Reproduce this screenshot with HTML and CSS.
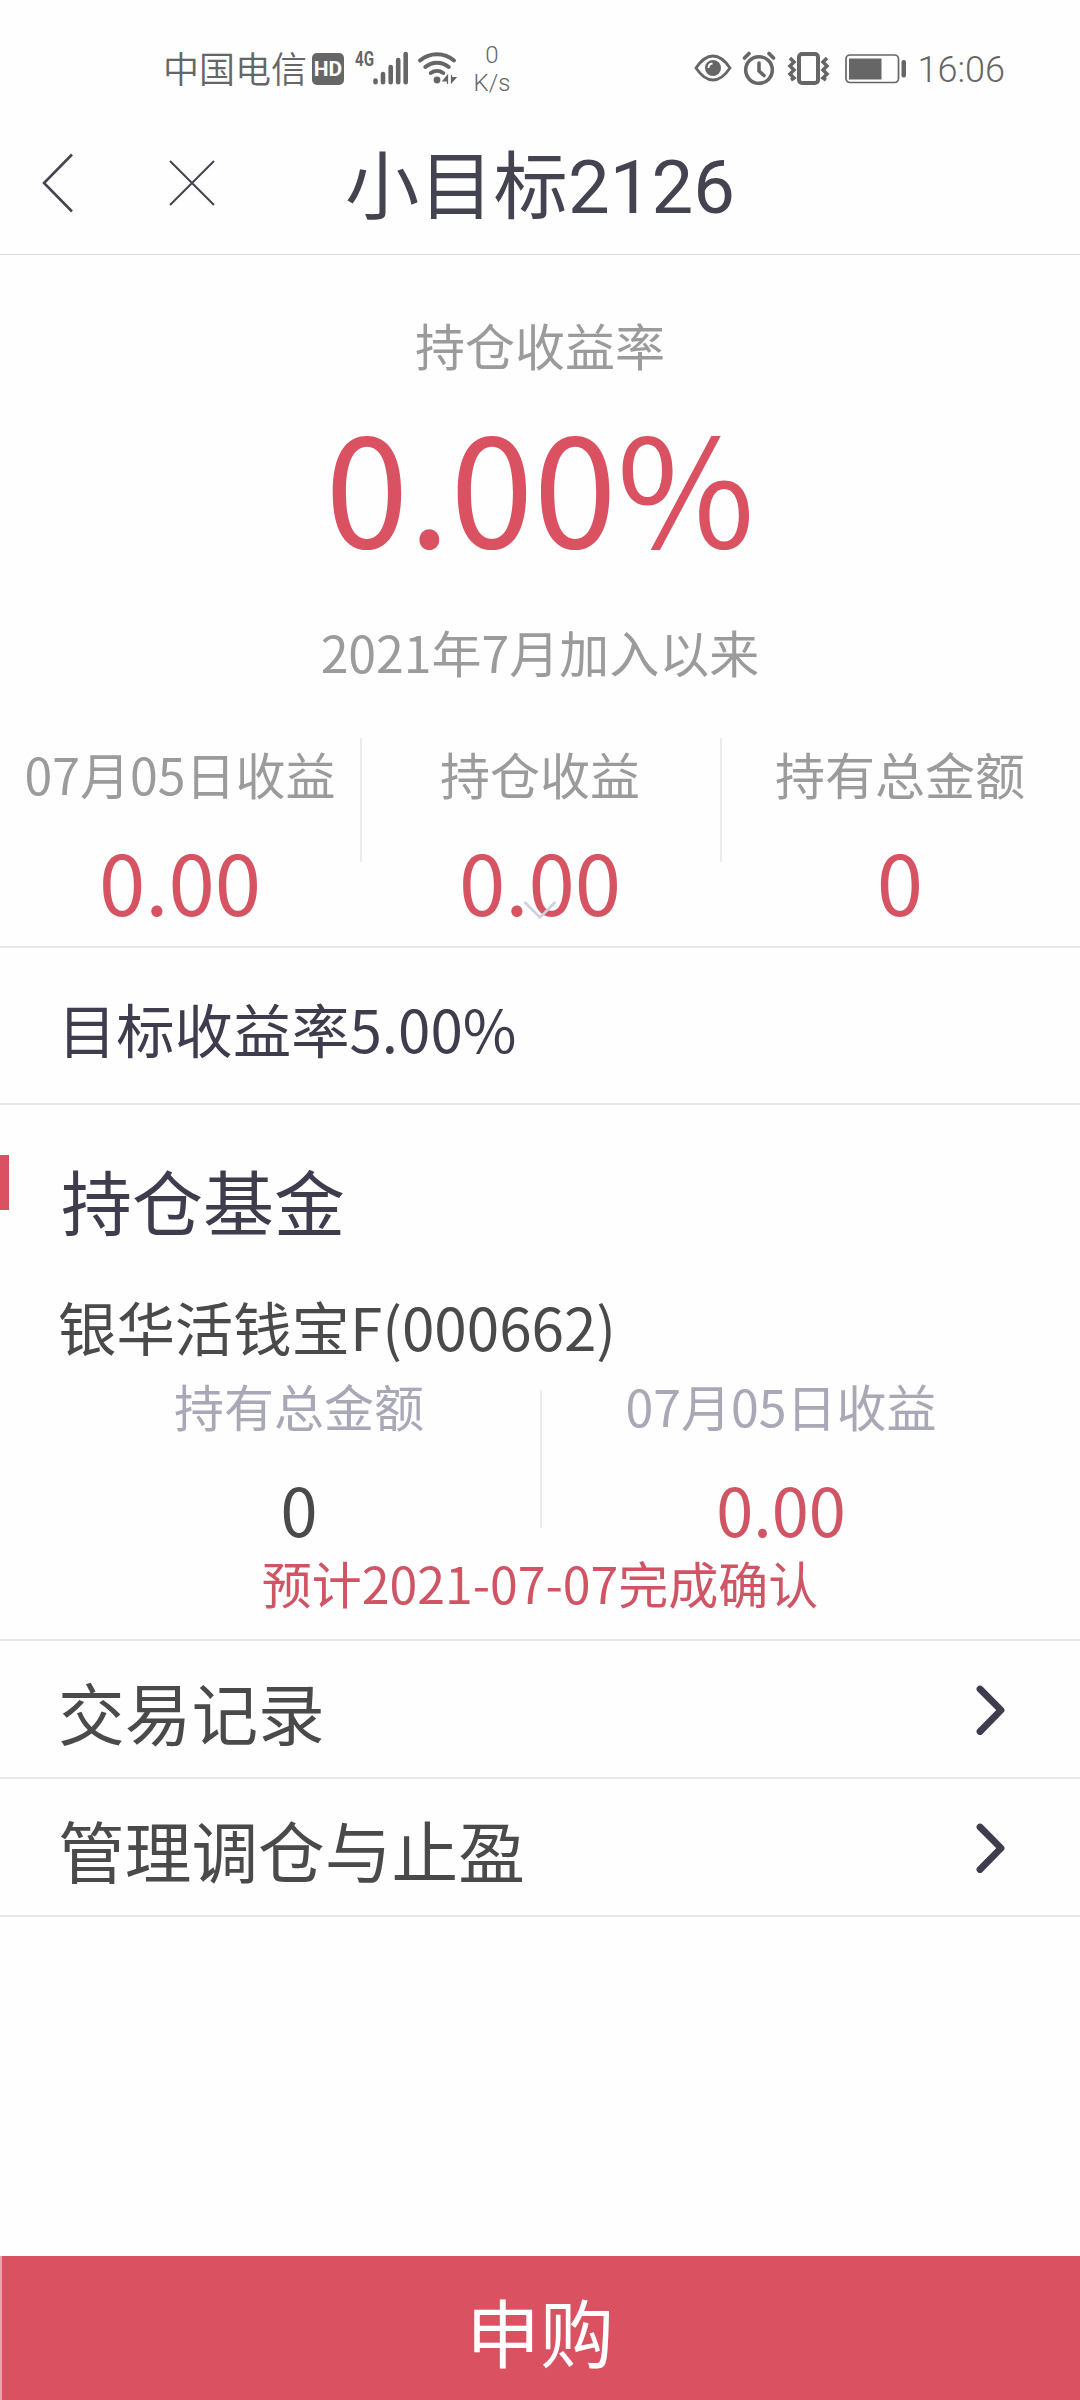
FILE: index.html
```html
<!DOCTYPE html>
<html lang="zh-CN">
<head>
    <meta charset="UTF-8">
    <meta name="viewport" content="width=device-width, initial-scale=1.0">
    <title>小目标2126</title>
    <link rel="stylesheet" href="styles.css">
</head>
<body>

    <div class="status-bar">
        <div class="status-left">
            <span class="carrier">中国电信</span>
            <span class="hd">HD</span>
            <span class="net">4G</span>
            <svg class="signal" width="36" height="34" viewBox="0 0 36 34" fill="none" stroke="#666" stroke-width="4.6" stroke-linecap="round">
                <path d="M2.500 29.500v1.800M10 23v8.300M17.700 16v15.300M25.200 9v22.300M32.700 3v28.300"/>
            </svg>
            <svg class="wifi" width="40" height="34" viewBox="0 0 40 34" fill="none" stroke="#666" stroke-width="4" stroke-linecap="round">
                <path d="M3 9.500a26 26 0 0 1 34 0M8.300 16a18 18 0 0 1 23.400 0M13.800 22a10.500 10.500 0 0 1 12.400 0"/>
                <circle cx="20" cy="29" r="3.400" fill="#666" stroke="none"/>
                <path d="M30.500 24v9M30.500 24.500l-4.500 5.500h4.500zM34.500 24v8.500M34.500 31.500v-5h4.500z" fill="#666" stroke-width="1.200" stroke-linecap="butt"/>
            </svg>
            <div class="speed">
                <span>0</span>
                <span>K/s</span>
            </div>
        </div>
        <div class="status-right">
            <svg class="eye" width="38" height="34" viewBox="0 0 38 34">
                <path d="M2 17Q10 5 19 5T36 17Q28 29 19 29T2 17z" fill="none" stroke="#666" stroke-width="2.800"/>
                <circle cx="19" cy="17" r="8" fill="#666"/>
                <path d="M14.500 17a4.500 4.500 0 0 1 4-4.500" fill="none" stroke="#fff" stroke-width="1.800"/>
            </svg>
            <svg class="alarm" width="34" height="34" viewBox="0 0 34 34" fill="none" stroke="#666" stroke-width="3.600" stroke-linecap="round">
                <circle cx="17" cy="19" r="13.300"/>
                <path d="M17 12v8l5 4.500M2.500 7l4.500-4.500M27 2.500L31.500 7"/>
            </svg>
            <svg class="vibrate" width="44" height="34" viewBox="0 0 44 34" fill="none" stroke="#666">
                <rect x="12" y="3" width="19" height="29" rx="3" stroke-width="4"/>
                <path d="M3 7l4 4-4 4 4 4-4 4 4 4-3 2M40 7l-4 4 4 4-4 4 4 4-4 4 3 2" stroke-width="3.500"/>
            </svg>
            <svg class="battery" width="62" height="34" viewBox="0 0 62 34">
                <rect x="1" y="4" width="52.500" height="27.500" rx="4" fill="none" stroke="#666" stroke-width="1.700"/>
                <rect x="4" y="7.500" width="32.500" height="21" fill="#666"/>
                <rect x="56.500" y="9" width="4.500" height="17.500" rx="2" fill="#666"/>
            </svg>
            <span class="time">16:06</span>
        </div>
    </div>

    <div class="header">
        <svg class="back" width="34" height="62" viewBox="0 0 34 62" fill="none" stroke="#444350" stroke-width="2.600">
            <path d="M31 2.500L3 31l28 28.500"/>
        </svg>
        <svg class="close" width="48" height="48" viewBox="0 0 48 48" fill="none" stroke="#444350" stroke-width="2">
            <path d="M2 2l44 44M46 2L2 46"/>
        </svg>
        <h1 class="title">小目标2126</h1>
    </div>

    <div class="summary">
        <div class="label">持仓收益率</div>
        <div class="rate">0.00%</div>
        <div class="label since">2021年7月加入以来</div>
        <div class="summary-row">
            <div class="summary-item">
                <div class="label">07月05日收益</div>
                <div class="value">0.00</div>
            </div>
            <div class="summary-item">
                <div class="label">持仓收益</div>
                <div class="value">0.00</div>
            </div>
            <div class="summary-item">
                <div class="label">持有总金额</div>
                <div class="value">0</div>
            </div>
        </div>
        <svg class="expand" width="34" height="20" viewBox="0 0 34 20" fill="none" stroke="#cfd0dd" stroke-width="2.600">
            <path d="M1.500 2L17 17.500 32.500 2"/>
        </svg>
    </div>

    <div class="target">目标收益率5.00%</div>

    <div class="fund">
        <h2 class="fund-title">持仓基金</h2>
        <div class="fund-name">银华活钱宝F(000662)</div>
        <div class="fund-row">
            <div class="fund-item">
                <div class="fund-label">持有总金额</div>
                <div class="fund-value">0</div>
            </div>
            <div class="fund-item">
                <div class="fund-label">07月05日收益</div>
                <div class="fund-value red">0.00</div>
            </div>
        </div>
        <div class="confirm">预计2021-07-07完成确认</div>
    </div>

    <div class="menu">
        <a class="menu-item">
            <span>交易记录</span>
            <svg class="arrow" width="32" height="52" viewBox="0 0 32 52" fill="none" stroke="#3e3c4d" stroke-width="6.800" stroke-linecap="round" stroke-linejoin="round">
                <path d="M5 5l21 21.200L5 47.500"/>
            </svg>
        </a>
        <a class="menu-item">
            <span>管理调仓与止盈</span>
            <svg class="arrow" width="32" height="52" viewBox="0 0 32 52" fill="none" stroke="#3e3c4d" stroke-width="6.800" stroke-linecap="round" stroke-linejoin="round">
                <path d="M5 5l21 21.200L5 47.500"/>
            </svg>
        </a>
    </div>

    <button class="buy">申购</button>

</body>
</html>
```

FILE: styles.css
```css
* {
    box-sizing: border-box;
}

body {
    margin: 0;
    height: 2400px;
    display: flex;
    flex-direction: column;
    background-color: #fefefe;
    font-family: "Noto Sans CJK SC", sans-serif;
    font-weight: 400;
    color: #4a4a4a;
}

/* status bar */
.status-bar {
    display: flex;
    justify-content: space-between;
    height: 114px;
    padding: 0 75px 0 163px;
    color: #666;
    font-family: Roboto, "Noto Sans CJK SC", sans-serif;
}

.status-left, .status-right {
    display: flex;
    align-items: flex-start;
    padding-top: 51px;
}

.carrier {
    width: 149px;
    margin-top: 2px;
    font-size: 36px;
    font-weight: 350;
    line-height: 36px;
    white-space: nowrap;
}

.hd {
    width: 32px;
    height: 32px;
    margin-top: 2px;
    border-radius: 5px;
    background-color: #666;
    color: #fefefe;
    font-size: 21px;
    font-weight: 700;
    line-height: 32px;
    text-align: center;
}

.net {
    width: 18px;
    margin: -1px 0 0 11px;
    font-size: 21px;
    font-weight: 700;
    line-height: 18px;
    transform: scaleX(0.72);
    transform-origin: left;
}

.wifi {
    margin-left: 8px;
}

.speed {
    display: flex;
    flex-direction: column;
    align-items: center;
    width: 38px;
    margin: -10px 0 0 16px;
    font-size: 24px;
    font-weight: 300;
    line-height: 28px;
}

.alarm {
    margin-left: 10px;
}

.vibrate {
    margin-left: 11px;
}

.battery {
    margin-left: 14px;
}

.time {
    margin: 1px 0 0 11px;
    font-size: 36px;
    font-weight: 350;
    line-height: 37px;
}

/* title bar */
.header {
    display: flex;
    align-items: center;
    height: 141px;
    padding: 0 41px 2px;
    border-bottom: 1px solid #dcdcdf;
}

.close {
    margin-left: 93px;
}

.title {
    margin: 10px 0 0 129px;
    font-family: Roboto, "Noto Sans CJK SC", sans-serif;
    font-size: 74.3px;
    font-weight: 400;
    line-height: 100px;
    color: #444350;
    white-space: nowrap;
}

/* income summary */
.summary {
    position: relative;
    height: 693px;
    padding-top: 54px;
    border-bottom: 2px solid #e8e8e8;
    text-align: center;
}

.label {
    font-size: 50px;
    line-height: 70px;
    color: #9b9b9b;
}

.rate {
    margin-top: 10px;
    font-size: 150px;
    line-height: 188px;
    color: #da5161;
}

.since {
    margin-top: 39px;
}

.summary-row {
    display: grid;
    grid-template-columns: repeat(3, 1fr);
    margin-top: 52px;
}

.summary-item {
    position: relative;
}

/* short divider between the columns */
.summary-item + .summary-item::before {
    content: "";
    position: absolute;
    left: 0;
    top: 0;
    width: 2px;
    height: 124px;
    background-color: #ebebeb;
}

.value {
    margin-top: 22px;
    font-size: 83.5px;
    line-height: 100px;
    color: #d65362;
}

.expand {
    position: absolute;
    left: 523px;
    top: 645px;
}

.target {
    height: 157px;
    padding-left: 58px;
    border-bottom: 2px solid #e8e8e8;
    font-size: 58.3px;
    line-height: 160px;
    color: #3e3c4d;
}

/* fund card */
.fund {
    height: 536px;
    padding: 50px 58px 0;
    border-bottom: 2px solid #e8e8e8;
}

.fund-title {
    position: relative;
    margin: 0;
    padding-left: 3px;
    font-size: 71px;
    font-weight: 400;
    line-height: 88px;
    color: #3e3c4d;
}

.fund-title::before {
    content: "";
    position: absolute;
    left: -58px;
    top: 0;
    width: 9px;
    height: 55px;
    background-color: #da5161;
}

.fund-name {
    margin-top: 43px;
    font-size: 58.4px;
    line-height: 80px;
}

.fund-row {
    display: grid;
    grid-template-columns: repeat(2, 1fr);
    text-align: center;
}

.fund-item {
    position: relative;
}

.fund-item + .fund-item::before {
    content: "";
    position: absolute;
    left: 0;
    top: 24px;
    width: 2px;
    height: 138px;
    background-color: #ebebeb;
}

.fund-label {
    margin-top: 4px;
    font-size: 50px;
    line-height: 70px;
    color: #a9a8b6;
}

.fund-value {
    margin-top: 31px;
    font-size: 66.7px;
    line-height: 74px;
}

.red {
    color: #d05564;
}

.confirm {
    margin-top: 7px;
    font-size: 50px;
    line-height: 60px;
    text-align: center;
    color: #d05564;
}

/* links */
.menu-item {
    display: flex;
    justify-content: space-between;
    align-items: center;
    height: 138px;
    padding: 4px 73px 0 58px;
    border-bottom: 2px solid #e8e8e8;
    font-size: 66.7px;
    line-height: 100px;
}

.arrow {
    margin-bottom: 2px;
}

.buy {
    height: 144px;
    margin-top: auto;
    padding: 3px 2px 0 0;
    border: none;
    border-left: 2px solid #e9a5ad;
    background-color: #da5161;
    color: #fff;
    font-family: inherit;
    font-size: 74px;
    font-weight: 400;
    line-height: 100px;
}
```
